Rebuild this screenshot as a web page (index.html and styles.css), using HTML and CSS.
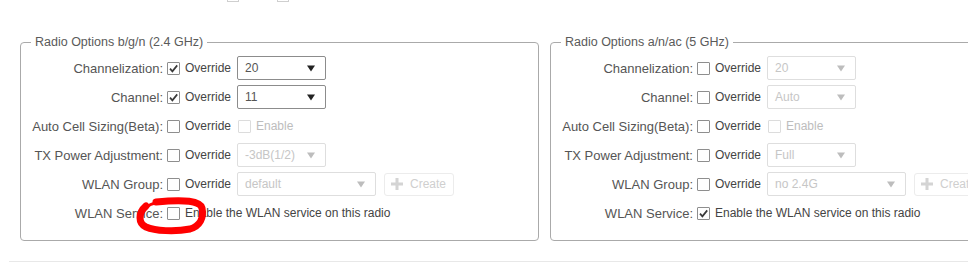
FILE: index.html
```html
<!DOCTYPE html>
<html lang="en">
<head>
  <meta charset="UTF-8" />
  <meta name="viewport" content="width=device-width, initial-scale=1" />
  <title>Radio Options</title>
  <link rel="stylesheet" href="styles.css">
</head>
<body>
  <div class="page">
    <!-- Bottom edge of the checkboxes from the row above -->
    <div class="top-row">
      <span class="stub"></span>
      <span class="stub"></span>
    </div>

    <div class="panels">
      <!-- 2.4 GHz -->
      <fieldset class="radio-box">
        <legend>Radio Options b/g/n (2.4 GHz)</legend>
        <div class="rows">
          <div class="row">
            <span class="field-label">Channelization:</span>
            <span class="cb"><svg viewBox="0 0 11 11"><path d="M2 5.6 L4.4 8.4 L9.2 2.4" /></svg></span>
            <span class="opt">Override</span>
            <div class="select">
              <span>20</span>
              <svg class="arrow" viewBox="0 0 9 7"><polygon points="0,0 9,0 4.5,7" /></svg>
            </div>
          </div>

          <div class="row">
            <span class="field-label">Channel:</span>
            <span class="cb"><svg viewBox="0 0 11 11"><path d="M2 5.6 L4.4 8.4 L9.2 2.4" /></svg></span>
            <span class="opt">Override</span>
            <div class="select">
              <span>11</span>
              <svg class="arrow" viewBox="0 0 9 7"><polygon points="0,0 9,0 4.5,7" /></svg>
            </div>
          </div>

          <div class="row">
            <span class="field-label">Auto Cell Sizing(Beta):</span>
            <span class="cb"></span>
            <span class="opt">Override</span>
            <span class="cb disabled inline"></span>
            <span class="opt muted">Enable</span>
          </div>

          <div class="row">
            <span class="field-label">TX Power Adjustment:</span>
            <span class="cb"></span>
            <span class="opt">Override</span>
            <div class="select disabled">
              <span>-3dB(1/2)</span>
              <svg class="arrow" viewBox="0 0 9 7"><polygon points="0,0 9,0 4.5,7" /></svg>
            </div>
          </div>

          <div class="row">
            <span class="field-label">WLAN Group:</span>
            <span class="cb"></span>
            <span class="opt">Override</span>
            <div class="select disabled wide">
              <span>default</span>
              <svg class="arrow" viewBox="0 0 9 7"><polygon points="0,0 9,0 4.5,7" /></svg>
            </div>
            <div class="btn disabled">
              <svg class="plus" viewBox="0 0 12 12"><rect x="4.5" y="0" width="3" height="12" /><rect x="0" y="4.5" width="12" height="3" /></svg>
              <span>Create</span>
            </div>
          </div>

          <div class="row">
            <span class="field-label">WLAN Service:</span>
            <span class="cb"></span>
            <span class="opt">Enable the WLAN service on this radio</span>
          </div>
        </div>
      </fieldset>

      <!-- 5 GHz -->
      <fieldset class="radio-box">
        <legend>Radio Options a/n/ac (5 GHz)</legend>
        <div class="rows">
          <div class="row">
            <span class="field-label">Channelization:</span>
            <span class="cb"></span>
            <span class="opt">Override</span>
            <div class="select disabled">
              <span>20</span>
              <svg class="arrow" viewBox="0 0 9 7"><polygon points="0,0 9,0 4.5,7" /></svg>
            </div>
          </div>

          <div class="row">
            <span class="field-label">Channel:</span>
            <span class="cb"></span>
            <span class="opt">Override</span>
            <div class="select disabled">
              <span>Auto</span>
              <svg class="arrow" viewBox="0 0 9 7"><polygon points="0,0 9,0 4.5,7" /></svg>
            </div>
          </div>

          <div class="row">
            <span class="field-label">Auto Cell Sizing(Beta):</span>
            <span class="cb"></span>
            <span class="opt">Override</span>
            <span class="cb disabled inline"></span>
            <span class="opt muted">Enable</span>
          </div>

          <div class="row">
            <span class="field-label">TX Power Adjustment:</span>
            <span class="cb"></span>
            <span class="opt">Override</span>
            <div class="select disabled">
              <span>Full</span>
              <svg class="arrow" viewBox="0 0 9 7"><polygon points="0,0 9,0 4.5,7" /></svg>
            </div>
          </div>

          <div class="row">
            <span class="field-label">WLAN Group:</span>
            <span class="cb"></span>
            <span class="opt">Override</span>
            <div class="select disabled wide">
              <span>no 2.4G</span>
              <svg class="arrow" viewBox="0 0 9 7"><polygon points="0,0 9,0 4.5,7" /></svg>
            </div>
            <div class="btn disabled">
              <svg class="plus" viewBox="0 0 12 12"><rect x="4.5" y="0" width="3" height="12" /><rect x="0" y="4.5" width="12" height="3" /></svg>
              <span>Create</span>
            </div>
          </div>

          <div class="row">
            <span class="field-label">WLAN Service:</span>
            <span class="cb"><svg viewBox="0 0 11 11"><path d="M2 5.6 L4.4 8.4 L9.2 2.4" /></svg></span>
            <span class="opt">Enable the WLAN service on this radio</span>
          </div>
        </div>
      </fieldset>
    </div>

    <div class="divider"></div>

    <!-- Hand-drawn red circle on top of the screenshot -->
    <svg class="scribble" viewBox="0 0 968 262">
      <path class="thin" d="M144 209 C148 205 153 203 160 202" />
      <path d="M156 202 C185 199 200 201 202 208 C204 218 200 226 190 229 C175 232 155 231 146 227 C138 223 138 213 146 206" />
    </svg>
  </div>
</body>
</html>
```

FILE: styles.css
```css
/* Reset and base styling */
* {
  box-sizing: border-box;
  margin: 0;
  padding: 0;
}

body {
  font-family: "Liberation Sans", Arial, sans-serif;
  font-size: 12px;
  color: #4d4d4d;
  background: #fff;
  overflow: hidden;
}

.page {
  position: relative;
  width: 968px;
  height: 262px;
}

/* Leftovers of the previous row */
.top-row {
  display: flex;
  gap: 38px;
  height: 2px;
  padding-left: 227px;
}

.stub {
  width: 12px;
  height: 2px;
  border: 1px solid #cfcfcf;
  border-top: none;
}

/* Two radio panels side by side */
.panels {
  display: flex;
  gap: 11px;
  margin-top: 32px;
  padding-left: 20px;
  overflow: hidden;
}

.radio-box {
  flex-shrink: 0;
  width: 519px;
  border: 1px solid #aaa;
  border-radius: 4px;
  padding: 6px 10px 15px 0;
  min-width: 0;
}

.radio-box legend {
  margin-left: 10px;
  padding: 0 4px;
  font-size: 12.5px;
  line-height: 16px;
  color: #5a5a5a;
}

.rows {
  display: flex;
  flex-direction: column;
  gap: 5px;
}

.row {
  display: flex;
  align-items: center;
  height: 24px;
  white-space: nowrap;
}

.field-label {
  width: 142px;
  margin-right: 4px;
  text-align: right;
  font-size: 13px;
  color: #555;
}

.opt {
  margin-left: 5px;
  color: #444;
}

.opt.muted {
  color: #bdbdbd;
}

/* Checkboxes */
.cb {
  display: inline-flex;
  align-items: center;
  justify-content: center;
  width: 13px;
  height: 13px;
  border: 1px solid #8e8e8e;
  border-radius: 1px;
  background: #fff;
}

.cb svg {
  width: 11px;
  height: 11px;
  fill: none;
  stroke: #3a3a3a;
  stroke-width: 1.7;
}

.cb.disabled {
  border-color: #dcdcdc;
}

.cb.inline {
  margin-left: 7px;
}

/* Drop downs */
.select {
  display: flex;
  align-items: center;
  justify-content: space-between;
  width: 89px;
  height: 24px;
  margin-left: 6px;
  padding: 0 10px 0 7px;
  border: 1px solid #8c8c8c;
  border-radius: 2px;
  color: #555;
}

.select.wide {
  width: 139px;
}

.select .arrow {
  width: 8px;
  height: 7px;
  fill: #222;
}

.select.disabled {
  border-color: #dedede;
  color: #c6c6c6;
}

.select.disabled .arrow {
  fill: #bdbdbd;
}

/* Create button */
.btn {
  display: flex;
  align-items: center;
  gap: 7px;
  flex-shrink: 0;
  width: 70px;
  height: 23px;
  margin-left: 8px;
  padding-left: 6px;
  border: 1px solid #ececec;
  border-radius: 3px;
  color: #cfcfcf;
}

.btn .plus {
  width: 12px;
  height: 12px;
  fill: #d4d4d4;
}

.divider {
  margin: 20px 0 0 9px;
  border-top: 1px solid #e8e8e8;
}

/* Red annotation */
.scribble {
  position: absolute;
  top: 0;
  left: 0;
  width: 968px;
  height: 262px;
  pointer-events: none;
}

.scribble path {
  fill: none;
  stroke: #ff0000;
  stroke-width: 7;
  stroke-linecap: round;
  stroke-linejoin: round;
}

.scribble path.thin {
  stroke-width: 3;
}
```
